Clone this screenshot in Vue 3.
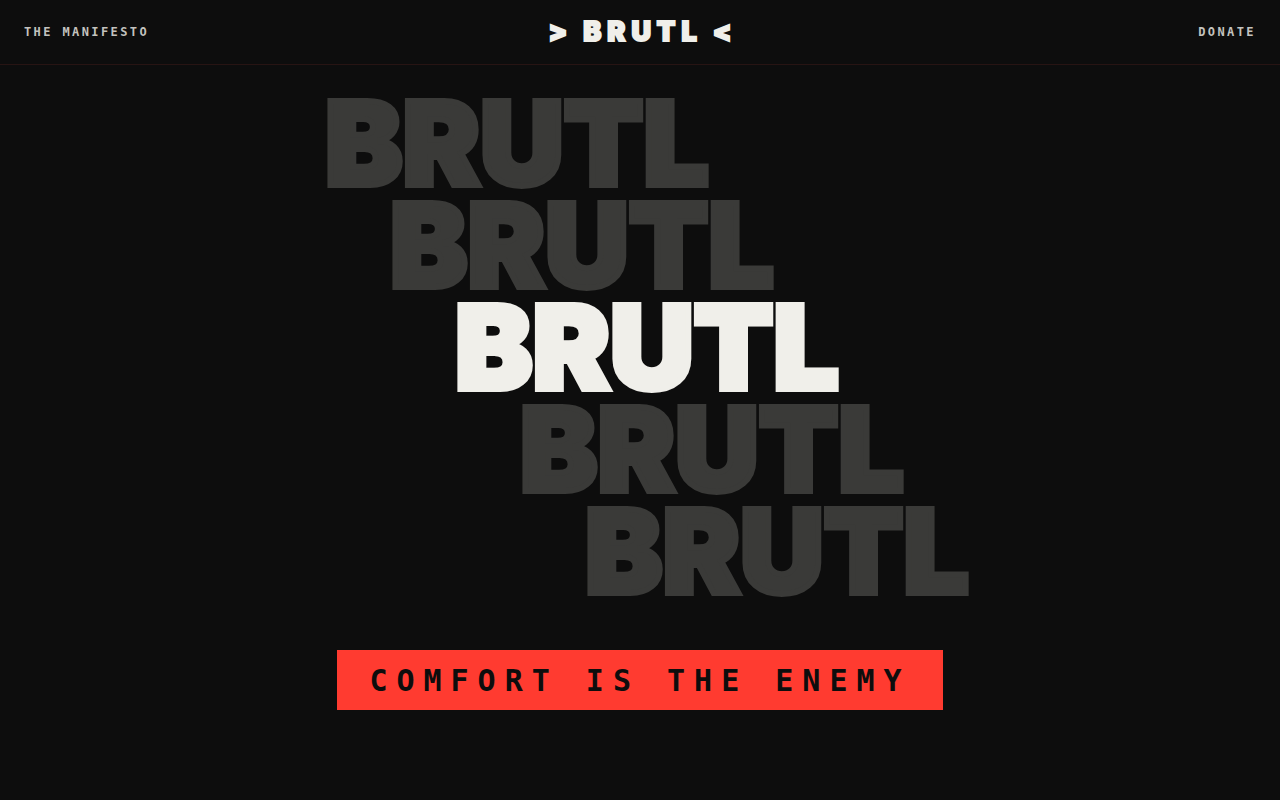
<script setup>
const word = 'BRUTL'
const rows = [0, 1, 2, 3, 4]
const activeRow = 2
</script>

<template>
  <div class="page">
    <header class="bar">
      <a class="link" href="#manifesto">THE MANIFESTO</a>
      <a class="logo" href="#top">
        <span>&gt;</span>
        <span class="name">{{ word }}</span>
        <span>&lt;</span>
      </a>
      <a class="link end" href="#donate">DONATE</a>
    </header>
    <main id="top" class="hero">
      <h1 class="stairs">
        <span
          v-for="row in rows"
          :key="row"
          class="step"
          :class="{ active: row === activeRow }"
          :style="{ marginLeft: `${row * 65}px` }"
          :aria-hidden="row !== activeRow"
        >{{ word }}</span>
      </h1>
      <p class="tagline">COMFORT IS THE ENEMY</p>
    </main>
  </div>
</template>

<style>
body {
  background: #0d0d0d;
}
</style>

<style scoped>
.page {
  min-height: 100vh;
  background: #0d0d0d;
  color: #f0efea;
  font-family: "DejaVu Sans Mono", monospace;
}

.bar {
  display: grid;
  grid-template-columns: 1fr auto 1fr;
  align-items: center;
  height: 64px;
  padding: 0 24px;
  border-bottom: 1px solid #271413;
}

.link {
  justify-self: start;
  color: #c3c2be;
  font-size: 12px;
  font-weight: 700;
  line-height: 16px;
  letter-spacing: 0.2em;
  text-decoration: none;
}

.end {
  justify-self: end;
}

.logo {
  display: flex;
  align-items: center;
  gap: 16px;
  color: #f0efea;
  font-family: Inter, sans-serif;
  font-size: 27px;
  font-weight: 900;
  line-height: 32px;
  text-decoration: none;
  -webkit-text-stroke: 2px currentColor;
}

.name {
  letter-spacing: 6px;
  margin-right: -6px;
}

.hero {
  display: flex;
  flex-direction: column;
  align-items: center;
  padding: 27px 24px 80px;
}

.stairs {
  display: flex;
  flex-direction: column;
  align-items: flex-start;
  margin: 0;
  padding-left: 14px;
  font-family: Inter, sans-serif;
  font-size: 116px;
  font-weight: 900;
  line-height: 102px;
}

.step {
  color: #3a3a38;
  -webkit-text-stroke: 6px currentColor;
}

.active {
  color: #f0efea;
}

.tagline {
  margin: 48px 0 0;
  padding: 13px 32px 11px;
  background: #ff3b30;
  color: #0d0d0d;
  font-size: 30px;
  font-weight: 700;
  line-height: 36px;
  letter-spacing: 0.3em;
  white-space: nowrap;
}
</style>
